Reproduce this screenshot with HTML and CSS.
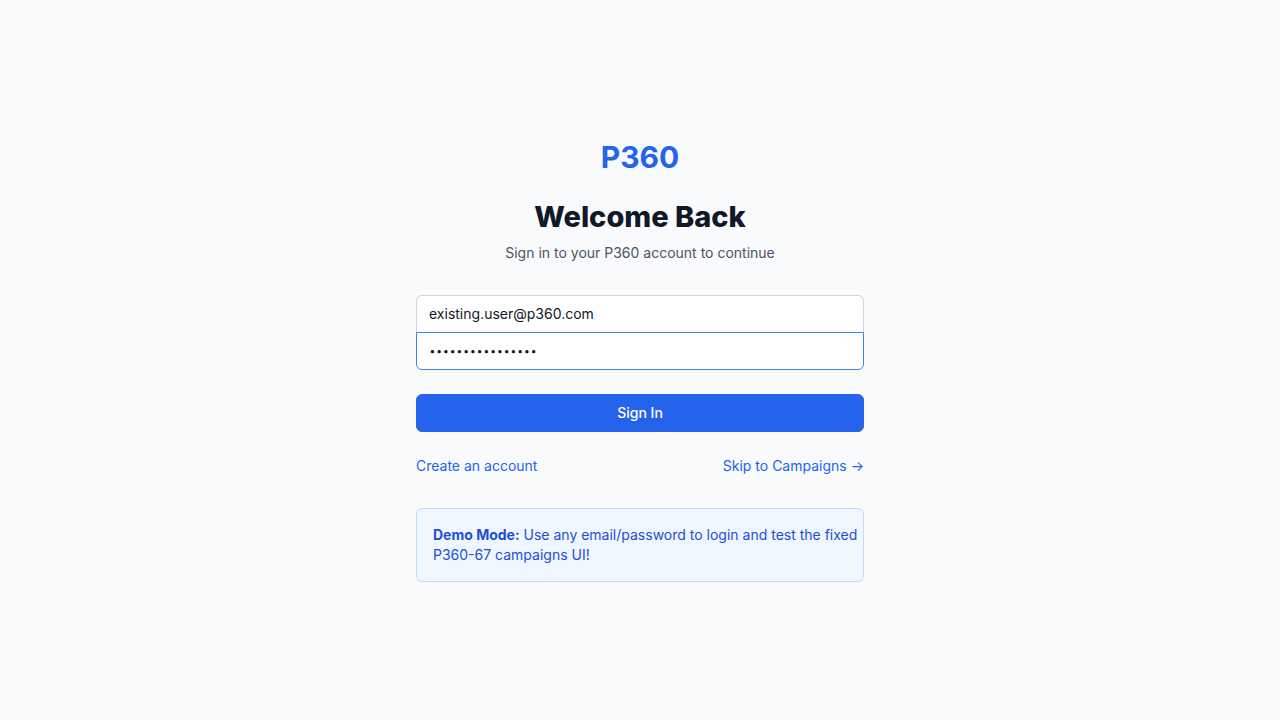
FILE: index.html
```html
<!DOCTYPE html>
<html lang="en">
<head>
<meta charset="utf-8">
<meta name="viewport" content="width=device-width, initial-scale=1">
<title>Sign in - P360</title>
<link rel="stylesheet" href="styles.css">
</head>
<body>
<main class="panel">
  <header class="intro">
    <p class="brand">P360</p>
    <h1 class="title">Welcome Back</h1>
    <p class="subtitle">Sign in to your P360 account to continue</p>
  </header>
  <form class="form">
    <div class="fields">
      <input class="field field-first" type="email" aria-label="Email address" value="existing.user@p360.com">
      <input class="field field-last" type="password" aria-label="Password" value="existingpassword">
    </div>
    <button class="submit" type="submit">Sign In</button>
    <nav class="links">
      <a class="link" href="#">Create an account</a>
      <a class="link" href="#">Skip to Campaigns →</a>
    </nav>
  </form>
  <p class="notice"><strong class="notice-label">Demo Mode:</strong> Use any email/password to login and test the fixed P360-67 campaigns UI!</p>
</main>
</body>
</html>
```
FILE: styles.css
```css
* {
  box-sizing: border-box;
  margin: 0;
}

body {
  min-height: 100vh;
  display: flex;
  align-items: center;
  justify-content: center;
  padding: 48px 16px;
  background: #f9fafb;
  color: #111827;
  font-family: Inter, sans-serif;
  font-size: 14px;
  font-weight: 400;
  line-height: 20px;
}

.panel {
  width: 100%;
  max-width: 448px;
  display: flex;
  flex-direction: column;
  gap: 32px;
}

.intro {
  text-align: center;
}

.brand {
  color: #2563eb;
  font-size: 30px;
  font-weight: 700;
  line-height: 36px;
}

.title {
  margin-top: 24px;
  font-size: 29px;
  font-weight: 800;
  line-height: 36px;
}

.subtitle {
  margin-top: 8px;
  color: #4b5563;
}

.form {
  display: flex;
  flex-direction: column;
  gap: 24px;
}

.fields {
  display: flex;
  flex-direction: column;
}

.field {
  width: 100%;
  padding: 8px 12px;
  border: 1px solid #d1d5db;
  background: #ffffff;
  color: #111827;
  font: inherit;
}

.field-first {
  border-radius: 6px 6px 0 0;
}

.field-last {
  height: 38px;
  margin-top: -1px;
  border-color: #3b82f6;
  border-radius: 0 0 6px 6px;
  font-size: 12px;
  font-weight: 300;
}

.submit {
  padding: 8px 16px;
  border: 1px solid #2563eb;
  border-radius: 6px;
  background: #2563eb;
  color: #ffffff;
  font: inherit;
  font-weight: 500;
  cursor: pointer;
}

.links {
  display: flex;
  justify-content: space-between;
}

.link {
  color: #2563eb;
  text-decoration: none;
}

.notice {
  padding: 16px 4px 16px 16px;
  border: 1px solid #bfdbfe;
  border-radius: 6px;
  background: #eff6ff;
  color: #1d4ed8;
}

.notice-label {
  font-weight: 700;
}
```
